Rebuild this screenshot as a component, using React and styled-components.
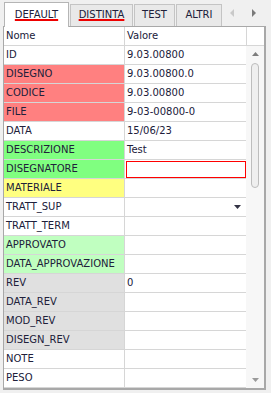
import React from "react";
import styled, { createGlobalStyle } from "styled-components";

const Global = createGlobalStyle`
  html, body { margin: 0; padding: 0; background: #f0f0f0; }
  * { box-sizing: border-box; }
  body { font-family: "DejaVu Sans", Verdana, sans-serif; font-size: 10px; color: #20203a; }
`;

const Root = styled.div`
  width: 271px;
  height: 393px;
  padding: 2px 5px 3px 3px;
  background: #f0f0f0;
  display: flex;
  flex-direction: column;
  overflow: hidden;
`;

const TabStrip = styled.div`
  height: 24px;
  display: flex;
  align-items: flex-end;
  gap: 1px;
  padding-left: 1px;
`;

const Tab = styled.div`
  width: ${(p) => p.$w}px;
  height: ${(p) => (p.$active ? 25 : 22)}px;
  margin-bottom: ${(p) => (p.$active ? -1 : 0)}px;
  position: relative;
  z-index: ${(p) => (p.$active ? 1 : 0)};
  background: ${(p) => (p.$active ? "#ffffff" : "#e9e9e9")};
  border: 1px solid ${(p) => (p.$active ? "#b5b5b5" : "#c4c4c4")};
  border-bottom: none;
  padding-top: ${(p) => (p.$active ? 5 : 3)}px;
  text-align: center;
  line-height: 13px;
  color: #20203a;
  white-space: nowrap;
`;

const TabLabel = styled.span`
  text-decoration: ${(p) => (p.$marked ? "underline" : "none")};
  text-decoration-color: #ee0000;
  text-decoration-thickness: 2px;
  text-underline-offset: 1px;
`;

const ArrowBox = styled.div`
  margin-left: auto;
  align-self: stretch;
  display: flex;
  align-items: center;
  gap: 18px;
  padding-right: 10px;
  padding-bottom: 3px;
`;

const Panel = styled.div`
  flex: 1;
  border-top: 1px solid #a8a8a8;
  border-left: 1px solid #a8a8a8;
  border-right: 2px solid #a8a8a8;
  border-bottom: 2px solid #a8a8a8;
  background: #ffffff;
  display: flex;
  flex-direction: column;
  overflow: hidden;
`;

const HeaderRow = styled.div`
  display: grid;
  grid-template-columns: 121px 122px 17px;
  height: 19px;
  border-bottom: 1px solid #d6d6d6;
  background: #ffffff;
`;

const HeaderCell = styled.div`
  padding-left: 2px;
  line-height: 18px;
  border-right: ${(p) => (p.$last ? "none" : "1px solid #d6d6d6")};
  color: #20203a;
`;

const Body = styled.div`
  flex: 1;
  display: flex;
  min-height: 0;
`;

const Rows = styled.div`
  width: 242px;
  display: flex;
  flex-direction: column;
`;

const Row = styled.div`
  display: grid;
  grid-template-columns: 121px 121px;
  height: 19px;
  flex-shrink: 0;
  border-bottom: 1px solid #d6d6d6;
`;

const NameCell = styled.div`
  background: ${(p) => p.$bg || "#ffffff"};
  border-right: 1px solid #d6d6d6;
  padding-left: 2px;
  line-height: 18px;
  white-space: nowrap;
  overflow: hidden;
`;

const ValueCell = styled.div`
  position: relative;
  padding-left: 2px;
  line-height: 18px;
  white-space: nowrap;
  display: flex;
  align-items: center;
`;

const Editor = styled.div`
  margin: 1px 0 0 -1px;
  align-self: flex-start;
  width: 120px;
  height: 17px;
  border: 1px solid #ff0000;
  background: #ffffff;
`;

const ComboArrow = styled.svg`
  margin-left: auto;
  margin-right: 5px;
`;

const ScrollBar = styled.div`
  width: 18px;
  background: #f7f7f7;
  display: flex;
  flex-direction: column;
  align-items: center;
`;

const ScrollButton = styled.div`
  height: 16px;
  width: 100%;
  display: flex;
  align-items: center;
  justify-content: center;
  flex-shrink: 0;
`;

const Thumb = styled.div`
  margin-top: 1px;
  width: 8px;
  height: 125px;
  border: 1px solid #bdbdbd;
  border-radius: 4px;
  background: #efefef;
  flex-shrink: 0;
`;

const Spacer = styled.div`
  flex: 1;
`;

const rows = [
  { n: "ID", v: "9.03.00800" },
  { n: "DISEGNO", v: "9.03.00800.0", c: "#ff8080" },
  { n: "CODICE", v: "9.03.00800", c: "#ff8080" },
  { n: "FILE", v: "9-03-00800-0", c: "#ff8080" },
  { n: "DATA", v: "15/06/23" },
  { n: "DESCRIZIONE", v: "Test", c: "#80ff80" },
  { n: "DISEGNATORE", v: "", c: "#80ff80", editor: true },
  { n: "MATERIALE", v: "", c: "#ffff80" },
  { n: "TRATT_SUP", v: "", combo: true },
  { n: "TRATT_TERM", v: "" },
  { n: "APPROVATO", v: "", c: "#c0ffc0" },
  { n: "DATA_APPROVAZIONE", v: "", c: "#c0ffc0" },
  { n: "REV", v: "0", c: "#e0e0e0" },
  { n: "DATA_REV", v: "", c: "#e0e0e0" },
  { n: "MOD_REV", v: "", c: "#e0e0e0" },
  { n: "DISEGN_REV", v: "", c: "#e0e0e0" },
  { n: "NOTE", v: "" },
  { n: "PESO", v: "" },
];

const tabs = [
  { t: "DEFAULT", w: 65, active: true, marked: true },
  { t: "DISTINTA", w: 63, marked: true },
  { t: "TEST", w: 41 },
  { t: "ALTRI", w: 46 },
];

export default function App() {
  return (
    <>
      <Global />
      <Root>
        <TabStrip>
          {tabs.map((t) => (
            <Tab key={t.t} $w={t.w} $active={t.active}>
              <TabLabel $marked={t.marked}>{t.t}</TabLabel>
            </Tab>
          ))}
          <ArrowBox>
            <svg width="4" height="8" viewBox="0 0 4 8">
              <path d="M4 0 L0 4 L4 8 Z" fill="#c9c9c9" />
            </svg>
            <svg width="4" height="8" viewBox="0 0 4 8">
              <path d="M0 0 L4 4 L0 8 Z" fill="#7a7a7a" />
            </svg>
          </ArrowBox>
        </TabStrip>
        <Panel>
          <HeaderRow>
            <HeaderCell>Nome</HeaderCell>
            <HeaderCell>Valore</HeaderCell>
            <HeaderCell $last />
          </HeaderRow>
          <Body>
            <Rows>
              {rows.map((r) => (
                <Row key={r.n}>
                  <NameCell $bg={r.c}>{r.n}</NameCell>
                  <ValueCell>
                    {r.editor ? <Editor /> : r.v}
                    {r.combo && (
                      <ComboArrow width="7" height="4" viewBox="0 0 7 4">
                        <path d="M0 0 L7 0 L3.5 4 Z" fill="#333344" />
                      </ComboArrow>
                    )}
                  </ValueCell>
                </Row>
              ))}
            </Rows>
            <ScrollBar>
              <ScrollButton>
                <svg width="7" height="4" viewBox="0 0 7 4">
                  <path d="M0 4 L7 4 L3.5 0 Z" fill="#7d7d7d" />
                </svg>
              </ScrollButton>
              <Thumb />
              <Spacer />
              <ScrollButton>
                <svg width="7" height="4" viewBox="0 0 7 4">
                  <path d="M0 0 L7 0 L3.5 4 Z" fill="#9a9a9a" />
                </svg>
              </ScrollButton>
            </ScrollBar>
          </Body>
        </Panel>
      </Root>
    </>
  );
}
